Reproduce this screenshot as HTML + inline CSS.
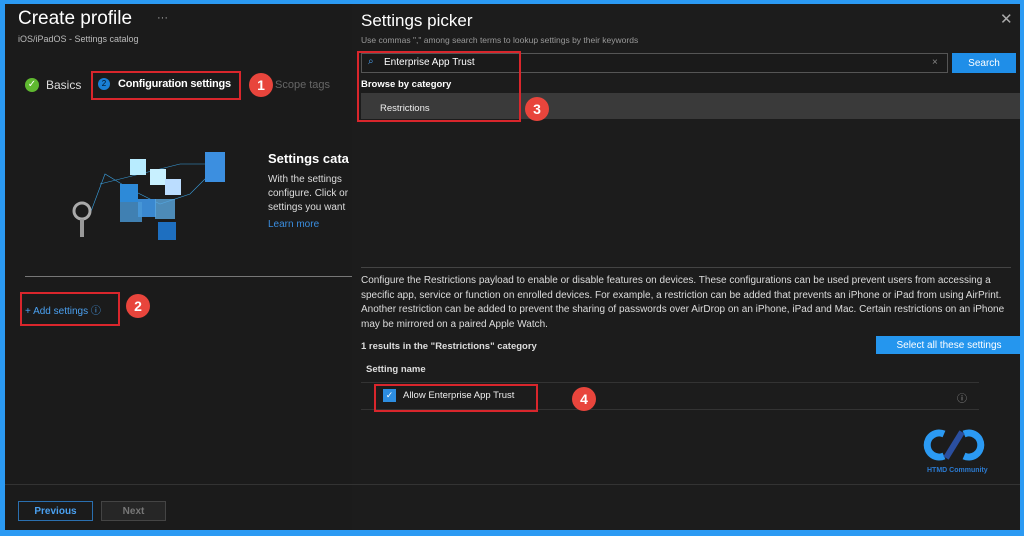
<!DOCTYPE html>
<html><head><meta charset="utf-8"><style>
*{margin:0;padding:0;box-sizing:border-box}
body{width:1024px;height:536px;background:#2b9af3;font-family:"Liberation Sans",sans-serif;overflow:hidden;position:relative}
.main{position:absolute;left:5px;top:4px;width:1015px;height:526px;background:#1b1b1b;overflow:hidden}
.a{position:absolute;white-space:nowrap}
.red{position:absolute;border:2px solid #d9262c}
.num{position:absolute;width:24px;height:24px;border-radius:50%;background:#e8453c;color:#fff;font-weight:bold;font-size:14px;text-align:center;line-height:24px}
.pk{position:absolute;left:347px;top:0;width:668px;height:526px;background:#1c1c1c}
.btn{display:flex;align-items:center;justify-content:center}
</style></head><body>
<div class="main">
<div class="a" style="left:13px;top:4px;font-size:19px;color:#fff">Create profile</div>
<div class="a" style="left:152px;top:8px;font-size:11px;color:#aaa">···</div>
<div class="a" style="left:13px;top:30px;font-size:9px;color:#bbb">iOS/iPadOS - Settings catalog</div>
<div class="a" style="left:20px;top:74px;width:14px;height:14px;border-radius:50%;background:#5fb830;color:#fff;font-size:10px;text-align:center;line-height:14px">✓</div>
<div class="a" style="left:41px;top:74px;font-size:12px;color:#ddd">Basics</div>
<div class="a" style="left:93px;top:74px;width:12px;height:12px;border-radius:50%;background:#1a7fd6;color:#012;font-size:8px;text-align:center;line-height:12px">2</div>
<div class="a" style="left:113px;top:74px;font-size:11px;color:#fff;font-weight:bold;letter-spacing:-0.2px">Configuration settings</div>
<div class="red" style="left:86px;top:67px;width:150px;height:29px"></div>
<div class="num" style="left:244px;top:69px">1</div>
<div class="a" style="left:270px;top:75px;font-size:11px;color:#666">Scope tags</div>
<svg class="a" style="left:55px;top:140px" width="170" height="100">
<g stroke="#3aa0e0" stroke-width="0.6" fill="none"><path d="M40 40 L80 30 L120 20 L150 20 M30 70 L45 30 L70 45 L100 60 L130 50 L150 30"/></g>
<rect x="70" y="15" width="16" height="16" fill="#b8ecff"/><rect x="90" y="25" width="16" height="16" fill="#c8f0ff"/><rect x="105" y="35" width="16" height="16" fill="#bdf"/>
<rect x="60" y="40" width="18" height="18" fill="#2d8ad8"/><rect x="78" y="55" width="18" height="18" fill="#3a88d0"/><rect x="60" y="58" width="22" height="20" fill="#4a9ad8" opacity=".8"/><rect x="95" y="55" width="20" height="20" fill="#5aa8e0" opacity=".8"/><rect x="98" y="78" width="18" height="18" fill="#1e6fc0"/>
<rect x="145" y="8" width="20" height="30" fill="#3c8fe0"/>
<circle cx="22" cy="67" r="8" fill="none" stroke="#aaa" stroke-width="3"/><rect x="20" y="75" width="4" height="18" fill="#999"/>
</svg>
<div class="a" style="left:263px;top:147px;font-size:13px;font-weight:bold;color:#fff">Settings cata</div>
<div class="a" style="left:263px;top:169px;font-size:10px;line-height:14px;color:#ddd">With the settings<br>configure. Click or<br>settings you want</div>
<div class="a" style="left:263px;top:215px;font-size:10px;color:#3a8ee0">Learn more</div>
<div class="a" style="left:20px;top:272px;width:330px;height:1px;background:#777"></div>
<div class="a" style="left:20px;top:298px;font-size:10px;color:#4aa0f0">+ Add settings ⓘ</div>
<div class="red" style="left:15px;top:288px;width:100px;height:34px"></div>
<div class="num" style="left:121px;top:290px">2</div>
<div class="a" style="left:0;top:480px;width:347px;height:1px;background:#333"></div>
<div class="a btn" style="left:13px;top:497px;width:75px;height:20px;border:1px solid #2a6fb0;color:#4aa0f0;font-size:10px;font-weight:bold">Previous</div>
<div class="a btn" style="left:96px;top:497px;width:65px;height:20px;border:1px solid #444;background:#262626;color:#777;font-size:10px;font-weight:bold">Next</div>
<div class="pk">
<div class="a" style="left:9px;top:7px;font-size:17px;color:#fff">Settings picker</div>
<div class="a" style="left:648px;top:6px;font-size:15px;color:#aaa">✕</div>
<div class="a" style="left:9px;top:31px;font-size:8.5px;color:#999">Use commas "," among search terms to lookup settings by their keywords</div>
<div class="a" style="left:9px;top:49px;width:587px;height:20px;border:1px solid #555;background:#1a1a1a"></div>
<div class="a" style="left:16px;top:52px;font-size:10px;color:#4aa0f0">⌕</div>
<div class="a" style="left:32px;top:53px;font-size:10px;color:#fff">Enterprise App Trust</div>
<div class="a" style="left:580px;top:53px;font-size:10px;color:#888">×</div>
<div class="a btn" style="left:600px;top:49px;width:64px;height:20px;background:#1f8ee8;color:#fff;font-size:10px">Search</div>
<div class="a" style="left:9px;top:75px;font-size:9.5px;font-weight:bold;color:#fff">Browse by category</div>
<div class="a" style="left:9px;top:89px;width:659px;height:26px;background:#3a3a3a"></div>
<div class="a" style="left:28px;top:99px;font-size:9.5px;color:#eee">Restrictions</div>
<div class="red" style="left:5px;top:47px;width:164px;height:71px"></div>
<div class="num" style="left:173px;top:93px">3</div>
<div class="a" style="left:9px;top:263px;width:650px;height:1px;background:#444"></div>
<div class="a" style="left:9px;top:270px;font-size:10px;line-height:14.5px;color:#ddd;white-space:normal;width:660px">Configure the Restrictions payload to enable or disable features on devices. These configurations can be used prevent users from accessing a specific app, service or function on enrolled devices. For example, a restriction can be added that prevents an iPhone or iPad from using AirPrint. Another restriction can be added to prevent the sharing of passwords over AirDrop on an iPhone, iPad and Mac. Certain restrictions on an iPhone may be mirrored on a paired Apple Watch.</div>
<div class="a" style="left:9px;top:337px;font-size:9.5px;font-weight:bold;color:#ddd">1 results in the "Restrictions" category</div>
<div class="a btn" style="left:524px;top:332px;width:146px;height:18px;background:#2596ee;color:#fff;font-size:10px">Select all these settings</div>
<div class="a" style="left:14px;top:360px;font-size:9.5px;font-weight:bold;color:#ddd">Setting name</div>
<div class="a" style="left:9px;top:378px;width:618px;height:1px;background:#333"></div>
<div class="a" style="left:9px;top:405px;width:618px;height:1px;background:#333"></div>
<div class="a" style="left:31px;top:385px;width:13px;height:13px;background:#2d8de0;color:#fff;font-size:9px;text-align:center;line-height:13px">✓</div>
<div class="a" style="left:51px;top:386px;font-size:9.5px;color:#eee">Allow Enterprise App Trust</div>
<div class="red" style="left:22px;top:380px;width:164px;height:28px"></div>
<div class="num" style="left:220px;top:383px">4</div>
<div class="a" style="left:605px;top:386px;font-size:10px;color:#999">ⓘ</div>
<div class="a" style="left:0;top:480px;width:668px;height:1px;background:#333"></div>
<svg class="a" style="left:570px;top:422px" width="70" height="40"><path d="M22 8 A12 12 0 1 0 22 30" stroke="#2b9af3" stroke-width="7" fill="none"/><path d="M42 8 A12 12 0 1 1 42 30" stroke="#2b9af3" stroke-width="7" fill="none"/><path d="M24 32 L40 6" stroke="#2a4fa0" stroke-width="6"/></svg>
<div class="a" style="left:575px;top:463px;font-size:7px;font-weight:bold;color:#2b7ad0">HTMD Community</div>
</div>
</div>
</body></html>
